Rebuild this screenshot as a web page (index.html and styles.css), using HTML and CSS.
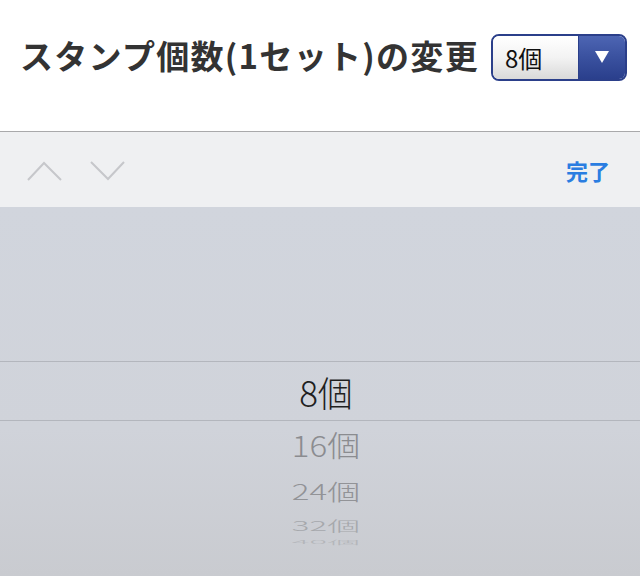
FILE: index.html
```html
<!DOCTYPE html>
<html lang="ja">
<head>
<meta charset="utf-8">
<link rel="stylesheet" href="styles.css">
</head>
<body>
<header class="header">
  <div class="row">
    <h1 class="title">スタンプ個数(1セット)の変更</h1>
    <div class="select">
      <span class="select-value">8個</span>
      <span class="select-btn"><svg width="16" height="14" viewBox="0 0 16 14"><polygon points="1,1 15,1 8,13" fill="#fff"/></svg></span>
    </div>
  </div>
</header>
<div class="toolbar">
  <div class="arrows">
    <svg class="chev" width="36" height="20" viewBox="0 0 36 20"><polyline points="1,19 17,2 34,19" fill="none" stroke="#c6c7cb" stroke-width="2"/></svg>
    <svg class="chev" width="36" height="20" viewBox="0 0 36 20"><polyline points="1,1 18,18 34,1" fill="none" stroke="#c6c7cb" stroke-width="2"/></svg>
  </div>
  <span class="done">完了</span>
</div>
<div class="picker">
  <div class="item selected"><span>8個</span></div>
  <div class="item i1"><span>16個</span></div>
  <div class="item i2"><span>24個</span></div>
  <div class="item i3"><span>32個</span></div>
  <div class="item i4"><span>40個</span></div>
</div>
</body>
</html>
```
FILE: styles.css
```css
html, body {
  margin: 0;
  padding: 0;
}
body {
  width: 640px;
  height: 576px;
  overflow: hidden;
  background: #fff;
  font-family: "Noto Sans CJK JP", "Noto Sans", sans-serif;
}
.header {
  box-sizing: border-box;
  height: 132px;
  padding: 34px 0 0 20px;
  border-bottom: 1px solid #a9a9ab;
}
.row {
  display: flex;
  align-items: center;
  height: 46px;
}
.title {
  margin: 0;
  font-size: 33px;
  font-weight: 700;
  color: #333;
  letter-spacing: 1.3px;
  line-height: 46px;
  margin-top: -4px;
}
.select {
  margin-left: auto;
  margin-right: 13px;
  box-sizing: border-box;
  width: 136px;
  height: 47px;
  border: 2px solid #2b3f8a;
  border-radius: 8px;
  display: flex;
  overflow: hidden;
}
.select-value {
  flex: 1;
  background: linear-gradient(#ffffff, #f3f3f3 50%, #d9d9d9);
  font-family: "Noto Sans CJK JP", sans-serif;
  font-size: 24px;
  color: #111;
  display: flex;
  align-items: center;
  padding-left: 12px;
}
.select-btn {
  width: 46px;
  background: linear-gradient(#4d65b3, #3a519f 50%, #2a3f8c);
  display: flex;
  align-items: center;
  justify-content: center;
  border-left: 1px solid #2b3f8a;
}
.toolbar {
  box-sizing: border-box;
  height: 75px;
  background: #eff0f2;
  display: flex;
  align-items: center;
  padding: 0 30px 0 27px;
}
.arrows {
  display: flex;
  gap: 27px;
  align-items: center;
  margin-top: 2px;
}
.done {
  margin-left: auto;
  font-size: 22px;
  font-weight: 700;
  color: #2a7de1;
  margin-top: 1px;
}
.picker {
  height: 369px;
  background: linear-gradient(#d1d5dd, #d0d3da 60%, #c9cbd0);
  padding-top: 154px;
  box-sizing: border-box;
  display: flex;
  flex-direction: column;
}
.item {
  display: flex;
  align-items: center;
  justify-content: center;
  font-family: "Noto Sans CJK JP", "Noto Sans", sans-serif;
  padding-left: 12px;
}
.item span {
  display: inline-block;
  line-height: 1;
}
.selected {
  height: 58px;
  border-top: 1px solid #b3b6bd;
  border-bottom: 1px solid #b3b6bd;
  font-size: 35px;
  font-weight: 300;
  color: #1f1f1f;
}
.i1 {
  height: 48px;
  font-size: 33px;
  font-weight: 300;
  color: #8b8c90;
}
.i1 span { transform: scaleY(0.88); }
.i2 {
  height: 44px;
  font-size: 33px;
  font-weight: 300;
  color: #929397;
}
.i2 span { transform: scaleY(0.66); }
.i3 {
  height: 24px;
  font-size: 33px;
  font-weight: 300;
  color: #a6a8ac;
}
.i3 span { transform: scaleY(0.42); }
.i4 {
  height: 10px;
  font-size: 33px;
  font-weight: 300;
  color: #b4b6ba;
  overflow: hidden;
}
.i4 span { transform: scaleY(0.14); }
```
